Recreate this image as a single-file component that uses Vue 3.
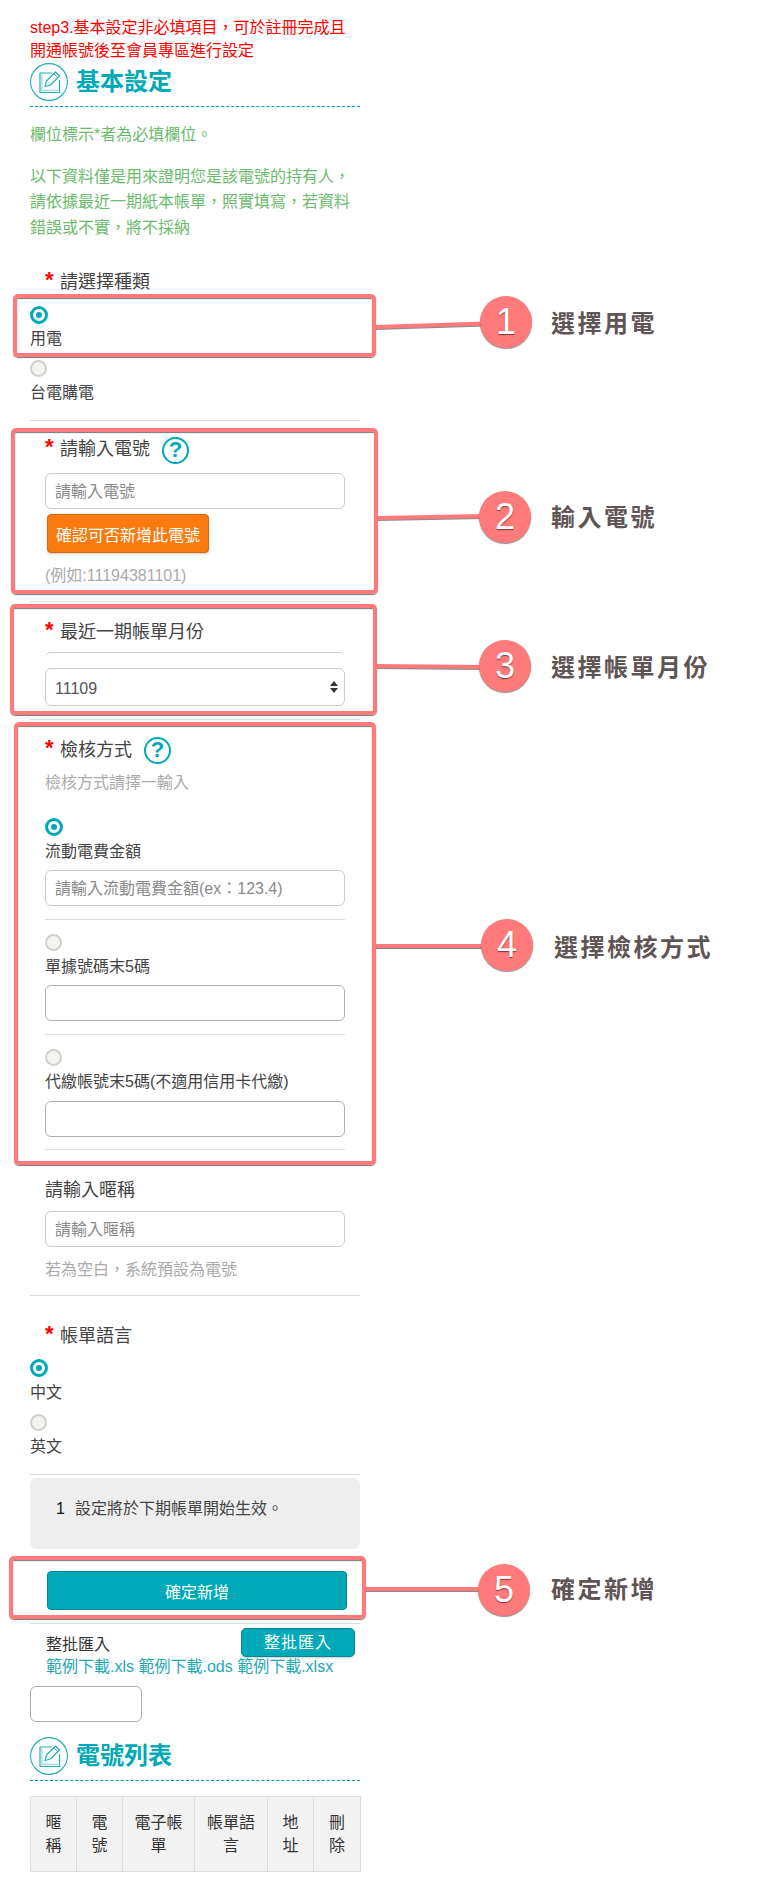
<script setup>
const frames = [
  { l: 13, t: 294, w: 363, h: 63 },
  { l: 11, t: 428, w: 367, h: 166 },
  { l: 10, t: 604, w: 367, h: 111 },
  { l: 14, t: 722, w: 362, h: 443 },
  { l: 9, t: 1556, w: 357, h: 63 }
]
const callouts = [
  { n: 1, x1: 375, y1: 327, x2: 485, y2: 323.5, cx: 506, cy: 322, tx: 551, ty: 322, text: '選擇用電' },
  { n: 2, x1: 377, y1: 518, x2: 484, y2: 516, cx: 505, cy: 517, tx: 551, ty: 516, text: '輸入電號' },
  { n: 3, x1: 376, y1: 666, x2: 484, y2: 667, cx: 505, cy: 666, tx: 551, ty: 666, text: '選擇帳單月份' },
  { n: 4, x1: 375, y1: 946, x2: 486, y2: 946, cx: 507, cy: 945, tx: 554, ty: 946, text: '選擇檢核方式' },
  { n: 5, x1: 365, y1: 1589, x2: 483, y2: 1589, cx: 504, cy: 1590, tx: 551, ty: 1588, text: '確定新增' }
]
const headers = ['暱稱', '電號', '電子帳單', '帳單語言', '地址', '刪除']
const widths = [46, 46, 72, 73, 46, 47]
</script>

<template>
  <div class="page">
    <main class="column">
      <p class="notice">step3.基本設定非必填項目&#xFF0C;可於註冊完成且<br />開通帳號後至會員專區進行設定</p>

      <div class="heading first">
        <svg class="heading-icon" viewBox="0 0 38 38" width="38" height="38" fill="none">
          <circle cx="19" cy="19" r="18.4" stroke="#22adba" stroke-width="1.1" />
          <path d="M22 10H10V29.5H29.5V17" stroke="#22adba" stroke-width="1.2" />
          <path d="M12 11.5V27.5H28" stroke="#a5dde2" stroke-width="1.4" />
          <path d="M15 23.5L16.5 18L25.5 9L29.5 13L20.5 22Z" stroke="#22adba" stroke-width="1.2" stroke-linejoin="round" />
          <path d="M23.8 10.8L27.8 14.8" stroke="#22adba" stroke-width="1" />
        </svg>
        <h2>基本設定</h2>
      </div>

      <p class="green g1">欄位標示*者為必填欄位。</p>
      <p class="green g2">以下資料僅是用來證明您是該電號的持有人&#xFF0C;<br />請依據最近一期紙本帳單&#xFF0C;照實填寫&#xFF0C;若資料<br />錯誤或不實&#xFF0C;將不採納</p>

      <div class="label m28"><span class="star">*</span>請選擇種類</div>
      <span class="radio on m12"></span>
      <div class="opt m3">用電</div>
      <span class="radio m11"></span>
      <div class="opt m3">台電購電</div>
      <hr class="m17" />

      <div class="label m14">
        <span class="star">*</span>請輸入電號<span class="help help-a">?</span>
      </div>
      <div class="indent">
        <input class="field m12" type="text" placeholder="請輸入電號" />
        <button class="btn-orange" type="button">確認可否新增此電號</button>
        <div class="hint m10">(例如:11194381101)</div>
      </div>
      <hr class="m15" />

      <div class="label m16"><span class="star">*</span>最近一期帳單月份</div>
      <div class="indent">
        <div class="stub"></div>
        <div class="select-wrap">
          <select class="field select">
            <option>11109</option>
          </select>
        </div>
      </div>
      <hr class="m13" />

      <div class="label m16">
        <span class="star">*</span>檢核方式<span class="help help-b">?</span>
      </div>
      <div class="indent">
        <div class="hint m8">檢核方式請擇一輸入</div>
        <span class="radio on m25"></span>
        <div class="opt m4">流動電費金額</div>
        <input class="field m8" type="text" placeholder="請輸入流動電費金額(ex&#xFF1A;123.4)" />
        <hr class="m13" />
        <span class="radio m14"></span>
        <div class="opt m3">單據號碼末5碼</div>
        <input class="field dark m8" type="text" />
        <hr class="m13" />
        <span class="radio m14"></span>
        <div class="opt m3">代繳帳號末5碼(不適用信用卡代繳)</div>
        <input class="field dark m9" type="text" />
        <hr class="m12" />
        <div class="label plain m26">請輸入暱稱</div>
        <input class="field m9" type="text" placeholder="請輸入暱稱" />
        <div class="hint m10">若為空白&#xFF0C;系統預設為電號</div>
      </div>
      <hr class="m15" />

      <div class="label m26"><span class="star">*</span>帳單語言</div>
      <span class="radio on m11"></span>
      <div class="opt m4">中文</div>
      <span class="radio m11"></span>
      <div class="opt m3">英文</div>
      <hr class="m17" />

      <div class="note"><span class="num">1</span>設定將於下期帳單開始生效。</div>

      <button class="btn-teal" type="button">確定新增</button>
      <hr class="m13" />

      <div class="bulk">
        <span>整批匯入</span>
        <button class="btn-bulk" type="button">整批匯入</button>
      </div>
      <div class="links">
        <a>範例下載.xls</a> <a>範例下載.ods</a> <a>範例下載.xlsx</a>
      </div>
      <input class="field dark short" type="text" />

      <div class="heading second">
        <svg class="heading-icon" viewBox="0 0 38 38" width="38" height="38" fill="none">
          <circle cx="19" cy="19" r="18.4" stroke="#22adba" stroke-width="1.1" />
          <path d="M22 10H10V29.5H29.5V17" stroke="#22adba" stroke-width="1.2" />
          <path d="M12 11.5V27.5H28" stroke="#a5dde2" stroke-width="1.4" />
          <path d="M15 23.5L16.5 18L25.5 9L29.5 13L20.5 22Z" stroke="#22adba" stroke-width="1.2" stroke-linejoin="round" />
          <path d="M23.8 10.8L27.8 14.8" stroke="#22adba" stroke-width="1" />
        </svg>
        <h2>電號列表</h2>
      </div>

      <table class="list">
        <colgroup>
          <col v-for="(w, i) in widths" :key="i" :style="{ width: w + 'px' }" />
        </colgroup>
        <thead>
          <tr>
            <th v-for="h in headers" :key="h">{{ h }}</th>
          </tr>
        </thead>
      </table>
    </main>

    <div class="overlay">
      <svg class="lines" width="757" height="1883">
        <g v-for="c in callouts" :key="c.n">
          <line :x1="c.x1" :y1="c.y1 + 2" :x2="c.x2" :y2="c.y2 + 2" stroke="#8a8a8a" stroke-width="2" />
          <line :x1="c.x1" :y1="c.y1" :x2="c.x2" :y2="c.y2" stroke="#ff7a7a" stroke-width="4" />
        </g>
      </svg>
      <div
        v-for="(f, i) in frames"
        :key="i"
        class="frame"
        :style="{ left: f.l + 'px', top: f.t + 'px', width: f.w + 'px', height: f.h + 'px' }"
      ></div>
      <template v-for="c in callouts" :key="c.n">
        <div class="badge" :style="{ left: c.cx - 26 + 'px', top: c.cy - 26 + 'px' }">{{ c.n }}</div>
        <div class="callout-text" :style="{ left: c.tx + 'px', top: c.ty - 18 + 'px' }">{{ c.text }}</div>
      </template>
    </div>
  </div>
</template>

<style scoped>
.page {
  position: relative;
  width: 757px;
  height: 1883px;
  overflow: hidden;
  background: #fff;
  font-family: "Liberation Sans", "Noto Sans CJK TC", sans-serif;
  font-size: 16px;
  color: #333;
}
.column {
  width: 330px;
  margin-left: 30px;
  padding-top: 16px;
  display: flow-root;
}
p {
  margin: 0;
}
.notice {
  color: #f00;
  line-height: 23px;
}
.heading {
  display: flex;
  align-items: center;
  gap: 8px;
  padding-bottom: 5px;
  border-bottom: 1px dashed #00a9b7;
}
.heading.first {
  margin-top: 1px;
}
.heading.second {
  margin-top: 15px;
  border-bottom-color: #0a98a6;
}
.heading-icon {
  flex: none;
}
.heading h2 {
  margin: 0;
  font-size: 24px;
  line-height: 38px;
  font-weight: 700;
  color: #00a9b7;
}
.green {
  color: #6cbb6c;
  line-height: 25.6px;
}
.g1 {
  margin-top: 15px;
}
.g2 {
  margin-top: 16px;
}
.label {
  display: flex;
  align-items: flex-start;
  height: 26px;
  margin-left: 15px;
  font-size: 18px;
  line-height: 28px;
  color: #444;
}
.label.plain {
  margin-left: 0;
}
.star {
  width: 15px;
  flex: none;
  margin-top: 1px;
  font-size: 22px;
  font-weight: 700;
  line-height: 22px;
  color: #f00;
}
.help {
  box-sizing: border-box;
  flex: none;
  width: 27px;
  height: 27px;
  border: 2.5px solid #00a9b7;
  border-radius: 50%;
  color: #00a9b7;
  font-size: 22px;
  font-weight: 700;
  line-height: 22px;
  text-align: center;
}
.help-a {
  margin: 2px 0 0 12px;
}
.help-b {
  margin: 1px 0 0 12px;
}
.radio {
  box-sizing: border-box;
  display: block;
  width: 17px;
  height: 17px;
  border: 2px solid #d0d0cc;
  border-radius: 50%;
  background: #f4f3ef;
}
.radio.on {
  position: relative;
  width: 18px;
  height: 18px;
  margin-bottom: -1px;
  border: 3px solid #00a9b7;
  background: #fff;
}
.radio.on::after {
  content: "";
  position: absolute;
  left: 3px;
  top: 3px;
  width: 6px;
  height: 6px;
  border-radius: 50%;
  background: #00a9b7;
}
.opt {
  padding-top: 1px;
  margin-bottom: -1px;
  line-height: 23px;
  color: #444;
}
.hint {
  padding-top: 1px;
  margin-bottom: -1px;
  line-height: 23px;
  color: #aaa;
}
hr {
  display: block;
  height: 1px;
  margin-bottom: 0;
  margin-left: 0;
  margin-right: 0;
  border: 0;
  background: #ddd;
}
.indent {
  margin-left: 15px;
  width: 300px;
}
.field {
  box-sizing: border-box;
  display: block;
  width: 300px;
  height: 36px;
  padding: 2px 9px 0;
  border: 1px solid #ccc;
  border-radius: 6px;
  background: #fff;
  font: inherit;
  color: #555;
  outline: none;
}
.field::placeholder {
  color: #8a8a8a;
  opacity: 1;
}
.field.dark {
  border-color: #b0b0b0;
}
.field.short {
  width: 112px;
  margin-top: 8px;
}
.stub {
  height: 8px;
  margin-top: 8px;
  border-top: 1px solid #ccc;
  border-radius: 6px 6px 0 0;
  box-sizing: border-box;
}
.select-wrap {
  position: relative;
  margin-top: 8px;
}
.select-wrap::before,
.select-wrap::after {
  content: "";
  position: absolute;
  right: 7px;
  border-left: 4px solid transparent;
  border-right: 4px solid transparent;
  pointer-events: none;
}
.select-wrap::before {
  top: 13px;
  border-bottom: 5px solid #333;
}
.select-wrap::after {
  top: 20px;
  border-top: 5px solid #333;
}
.select {
  height: 38px;
  appearance: none;
  color: #555;
}
.btn-orange {
  display: block;
  box-sizing: border-box;
  width: 162px;
  height: 39px;
  margin: 5px 0 0 2px;
  padding: 1px 0 0;
  border: 1px solid #d4680c;
  border-radius: 4px;
  background: #f97b10;
  box-shadow: 0 1px 2px rgba(0, 0, 0, 0.2);
  color: #fff;
  font: inherit;
}
.note {
  box-sizing: border-box;
  height: 71px;
  margin-top: 3px;
  padding: 19px 0 0 26px;
  border-radius: 6px;
  background: #eee;
  line-height: 23px;
  color: #444;
  display: flex;
}
.num {
  width: 19px;
  color: #111;
}
.btn-teal {
  display: block;
  box-sizing: border-box;
  width: 300px;
  height: 39px;
  margin: 22px 0 0 17px;
  padding: 1px 0 0;
  border: 1px solid #068592;
  border-radius: 4px;
  background: #00a9b7;
  color: #fff;
  font: inherit;
}
.bulk {
  display: flex;
  justify-content: space-between;
  align-items: center;
  width: 309px;
  height: 29px;
  margin: 4px 0 0 16px;
  line-height: 23px;
  color: #333;
  font-size: 16px;
}
.bulk span {
  margin-top: 3px;
}
.btn-bulk {
  box-sizing: border-box;
  width: 114px;
  height: 29px;
  padding: 0;
  border: 1px solid #068592;
  border-radius: 5px;
  background: #00a9b7;
  box-shadow: 0 1px 2px rgba(0, 0, 0, 0.2);
  color: #fff;
  font: inherit;
  letter-spacing: 1px;
}
.links {
  margin: -2px 0 0 16px;
  line-height: 23px;
  color: #1fa8b6;
  white-space: nowrap;
}
.list {
  box-sizing: border-box;
  width: 330px;
  margin-top: 15px;
  border-collapse: collapse;
  table-layout: fixed;
}
.list th {
  box-sizing: border-box;
  height: 74px;
  padding: 14px 8px;
  border: 1px solid #ddd;
  background: #f2f2f2;
  font-weight: 400;
  line-height: 23px;
  color: #333;
  text-align: center;
}
.overlay {
  position: absolute;
  inset: 0;
  pointer-events: none;
}
.lines {
  position: absolute;
  left: 0;
  top: 0;
}
.frame {
  position: absolute;
  box-sizing: border-box;
  border: 4px solid #ff7a7a;
  border-radius: 5px;
  box-shadow: 0 1px 1px #777, inset 0 1px 1px #777;
}
.badge {
  position: absolute;
  width: 52px;
  height: 52px;
  border-radius: 50%;
  background: #ff7a7a;
  box-shadow: 0 1px 1px rgba(0, 0, 0, 0.45);
  color: #fff;
  font-size: 36px;
  line-height: 52px;
  text-align: center;
  text-shadow: 0 1px 1px rgba(60, 30, 30, 0.7);
}
.callout-text {
  position: absolute;
  height: 36px;
  font-family: "Noto Sans CJK TC", sans-serif;
  font-size: 24px;
  font-weight: 700;
  line-height: 36px;
  letter-spacing: 2.5px;
  color: #5f5555;
  white-space: nowrap;
}
.m3 { margin-top: 3px; }
.m4 { margin-top: 4px; }
.m8 { margin-top: 8px; }
.m9 { margin-top: 9px; }
.m10 { margin-top: 10px; }
.m11 { margin-top: 11px; }
.m12 { margin-top: 12px; }
.m13 { margin-top: 13px; }
.m14 { margin-top: 14px; }
.m15 { margin-top: 15px; }
.m16 { margin-top: 16px; }
.m17 { margin-top: 17px; }
.m25 { margin-top: 25px; }
.m26 { margin-top: 26px; }
.m28 { margin-top: 28px; }
</style>
